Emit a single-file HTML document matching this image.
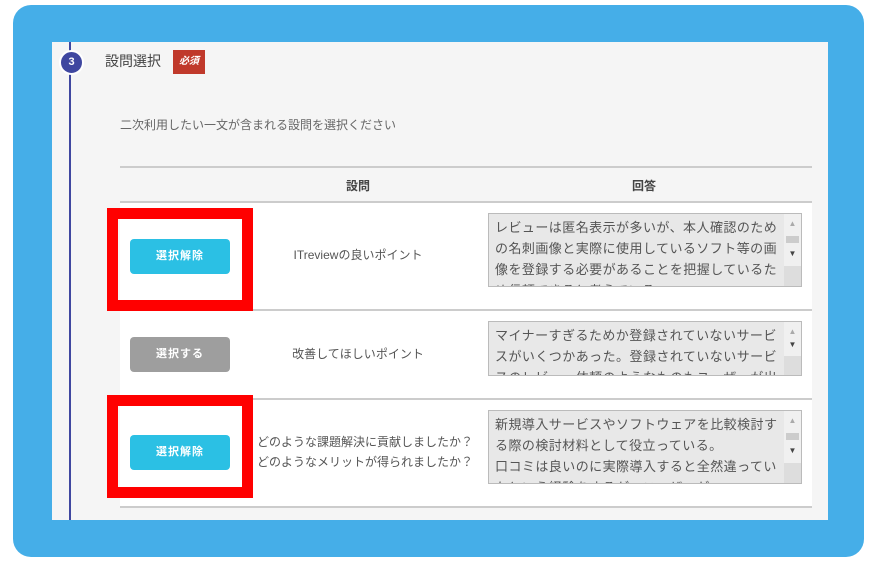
<!DOCTYPE html>
<html><head><meta charset="utf-8"><style>
*{box-sizing:border-box;margin:0;padding:0}
body{width:878px;height:567px;background:#fff;position:relative;overflow:hidden;font-family:"Liberation Sans","Noto Sans CJK JP",sans-serif;color:#555}
.abs{position:absolute}
.frame{left:13px;top:5px;width:851px;height:552px;background:#45aee8;border-radius:18px}
.panel{left:52px;top:42px;width:776px;height:478px;background:#f5f5f5}
.line{left:69px;top:42px;width:2px;height:478px;background:#3f47a0}
.circ{left:59px;top:50px;width:25px;height:25px;border-radius:50%;background:#3f47a0;border:2px solid #fff;color:#fff;font-size:11px;font-weight:bold;text-align:center;line-height:21px}
.ttl{left:105px;top:51px;font-size:14px;color:#444}
.req{left:173px;top:50px;width:32px;height:24px;background:#c0392b;color:#fff;font-size:10px;font-weight:bold;font-style:italic;text-align:center;line-height:24px}
.desc{left:120px;top:116px;font-size:12px;color:#666}
.hdr{left:120px;top:166px;width:692px;height:37px;border-top:2px solid #ccc;border-bottom:2px solid #ccc;font-size:12px;font-weight:bold;color:#444}
.row{left:120px;width:692px;background:#fff;border-bottom:2px solid #ccc}
.btn{position:absolute;left:10px;width:100px;height:35px;border-radius:4px;color:#fff;font-size:11px;font-weight:bold;text-align:center;line-height:35px;letter-spacing:1px}
.q{position:absolute;font-size:12px;color:#555;text-align:center;width:220px;left:128px;line-height:20px}
.ta{position:absolute;left:368px;width:314px;background:#e8e8e8;border:1px solid #bbb;font-size:13px;letter-spacing:0.45px;color:#555;line-height:21px;padding:3px 20px 0 6px;overflow:hidden}
.sb{position:absolute;right:0;top:0;width:17px;height:100%;background:#ddd}
.sb i{position:absolute;left:0;width:17px;background:#f0f0f0}
.sb b{position:absolute;left:0;width:17px;text-align:center;font-size:8px;line-height:10px;color:#444;font-weight:normal;letter-spacing:0}
.red{border:11px solid #f00;left:107px;width:146px;height:103px}
</style></head><body>
<div class="abs frame"></div>
<div class="abs panel"></div>
<div class="abs line"></div>
<div class="abs circ">3</div>
<div class="abs ttl">設問選択</div>
<div class="abs req">必須</div>
<div class="abs desc">二次利用したい一文が含まれる設問を選択ください</div>
<div class="abs hdr"><span class="abs" style="left:226px;top:9px">設問</span><span class="abs" style="left:512px;top:9px">回答</span></div>

<div class="abs row" style="top:203px;height:108px">
<div class="btn" style="top:36px;background:#2bc0e4">選択解除</div>
<div class="q" style="top:42px">ITreviewの良いポイント</div>
<div class="ta" style="top:10px;height:74px">レビューは匿名表示が多いが、本人確認のための名刺画像と実際に使用しているソフト等の画像を登録する必要があることを把握しているため信頼できると考えている<div class="sb"><i style="top:0;height:52px"></i><b style="top:5px;color:#aaa">▲</b><span class="abs" style="left:2px;top:22px;width:13px;height:7px;background:#ccc"></span><b style="top:35px">▼</b></div></div>
</div>

<div class="abs row" style="top:311px;height:89px">
<div class="btn" style="top:26px;background:#9e9e9e">選択する</div>
<div class="q" style="top:33px">改善してほしいポイント</div>
<div class="ta" style="top:10px;height:55px">マイナーすぎるためか登録されていないサービスがいくつかあった。登録されていないサービスのレビュー依頼のようなものもユーザーが出<div class="sb"><i style="top:0;height:34px"></i><b style="top:5px;color:#aaa">▲</b><b style="top:18px">▼</b></div></div>
</div>

<div class="abs row" style="top:400px;height:108px">
<div class="btn" style="top:35px;background:#2bc0e4">選択解除</div>
<div class="q" style="top:32px;left:130px;width:230px">どのような課題解決に貢献しましたか？<br>どのようなメリットが得られましたか？</div>
<div class="ta" style="top:10px;height:74px">新規導入サービスやソフトウェアを比較検討する際の検討材料として役立っている。<br>口コミは良いのに実際導入すると全然違っていたという経験をするが、ユーザーが<div class="sb"><i style="top:0;height:52px"></i><b style="top:5px;color:#aaa">▲</b><span class="abs" style="left:2px;top:22px;width:13px;height:7px;background:#ccc"></span><b style="top:35px">▼</b></div></div>
</div>

<div class="abs red" style="top:208px"></div>
<div class="abs red" style="top:395px"></div>
</body></html>
